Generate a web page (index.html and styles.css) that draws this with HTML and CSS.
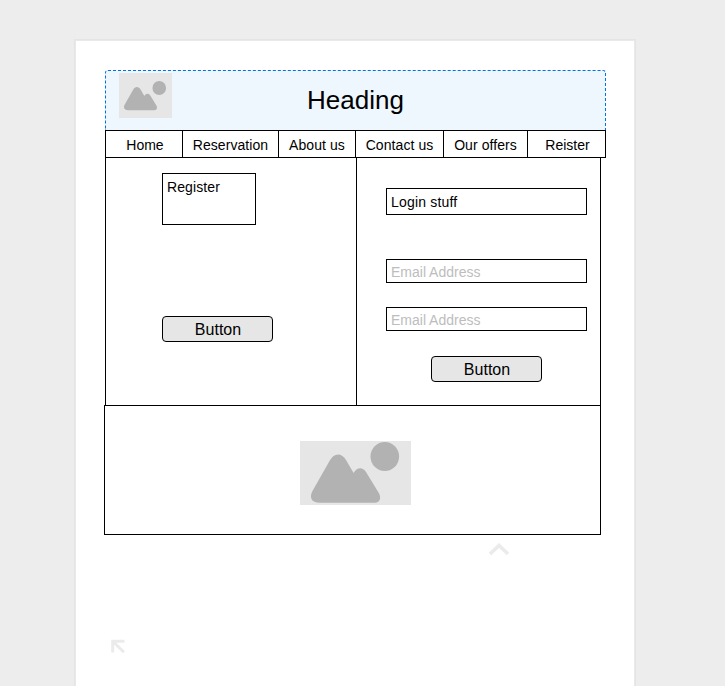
FILE: index.html
```html
<!DOCTYPE html>
<html lang="en">
<head>
<meta charset="utf-8">
<title>Heading</title>
<link rel="stylesheet" href="styles.css">
</head>
<body>
<svg class="defs" width="0" height="0" aria-hidden="true">
  <symbol id="landscape" overflow="visible">
    <path d="M12.5 50 L29.5 20 C34 11.5 41.5 11.5 46 19 L53.6 32 C56.5 26.5 62.5 25.5 66 31 L78.5 51.5 C82 57 79.5 61.8 75 61.8 H20 C11 61.8 9.2 56 12.5 50 Z"/>
    <ellipse cx="84.8" cy="15.5" rx="14.3" ry="14.6"/>
  </symbol>
</svg>
<div class="page">
  <header class="header">
    <svg class="logo" viewBox="0.5 -16 111 94.3"><use href="#landscape"/></svg>
    <h1>Heading</h1>
  </header>
  <nav class="nav">
    <a>Home</a><a class="wide">Reservation</a><a class="wide">About us</a><a class="wide">Contact us</a><a class="wide">Our offers</a><a>Reister</a>
  </nav>
  <main class="main">
    <section class="register">
      <div class="box register-box">Register</div>
      <button class="btn">Button</button>
    </section>
    <section class="login">
      <div class="box login-title">Login stuff</div>
      <div class="box field">Email Address</div>
      <div class="box field">Email Address</div>
      <button class="btn">Button</button>
    </section>
  </main>
  <footer class="footer">
    <svg class="photo" viewBox="0 0 111 64"><use href="#landscape"/></svg>
  </footer>
  <svg class="chevron" width="22" height="14" viewBox="0 0 22 14"><path d="M2 12 L11 3.5 L20 12"/></svg>
  <svg class="corner" width="14" height="14" viewBox="0 0 14 14"><path d="M1.7 13.5 V2.2 H13.5 M2 2.5 L13 13.3"/></svg>
</div>
</body>
</html>
```
FILE: styles.css
```css
* { box-sizing: border-box; }
body {
  margin: 0;
  height: 686px;
  overflow: hidden;
  background: #ededed;
  font: 14px/16px "Liberation Sans", Arial, sans-serif;
  color: #000;
}
.defs { display: block; }
.page {
  width: 562px;
  height: 660px;
  margin: 39px 0 0 74px;
  padding: 30px 0 0 29px;
  border: 1px solid #e4e4e4;
  background: #fff;
  box-shadow: inset 0 0 0 1px #e9e9e9;
}
.header {
  width: 501px;
  height: 60px;
  margin-left: 1px;
  display: grid;
  grid-template-columns: 1fr;
  border: 1px dashed #0071ea;
  border-bottom: 0;
  border-radius: 3px 3px 0 0;
  background: #eef6fe;
}
.header > * { grid-area: 1 / 1; }
.header h1 {
  margin: 0;
  padding-top: 14px;
  font-size: 26px;
  line-height: 30px;
  font-weight: 400;
  text-align: center;
}
.logo, .photo { background: #e6e6e6; fill: #b2b2b2; display: block; }
.logo { width: 53px; height: 45px; margin: 2px 0 0 13px; }
.nav {
  width: 501px;
  height: 28px;
  margin-left: 1px;
  display: grid;
  grid-template-columns: 77px 96px 77px 88px 84px 78px;
  border: 1px solid #000;
  border-right: 0;
}
.nav a {
  padding: 6px 0 0 2px;
  border-right: 1px solid #000;
  text-align: center;
  white-space: nowrap;
}
.nav .wide { padding-left: 0; letter-spacing: 0.07px; }
.main {
  width: 496px;
  height: 247px;
  margin-left: 1px;
  display: grid;
  grid-template-columns: 251px 243px;
  border: 1px solid #000;
  border-width: 0 1px;
}
.register {
  padding: 15px 0 0 56px;
  border-right: 1px solid #000;
}
.login { padding: 30px 0 0 29px; }
.box { border: 1px solid #000; padding-left: 4px; }
.register-box { width: 94px; height: 52px; padding-top: 5px; margin-bottom: 91px; }
.login-title { width: 201px; height: 27px; padding-top: 5px; margin-bottom: 44px; }
.field { width: 201px; height: 24px; padding-top: 4px; margin-bottom: 24px; color: #bdbdbd; }
.btn {
  display: block;
  width: 111px;
  height: 26px;
  padding: 1px 0 0 1px;
  border: 1px solid #000;
  border-radius: 4px;
  background: #e6e6e6;
  color: #000;
  font: 16px/23px "Liberation Sans", Arial, sans-serif;
}
.login .btn { margin: 25px 0 0 45px; }
.register-box { letter-spacing: 0.1px; }
.login-title { letter-spacing: 0.18px; }
.footer {
  width: 497px;
  height: 130px;
  padding: 35px 0 0 195px;
  border: 1px solid #000;
}
.photo { width: 111px; height: 64px; }
.chevron, .corner { display: block; fill: none; stroke: #ebebeb; stroke-width: 3; }
.chevron { margin: 7px 0 0 384px; stroke-width: 3.6; }
.corner { margin: 83px 0 0 7px; }
```
